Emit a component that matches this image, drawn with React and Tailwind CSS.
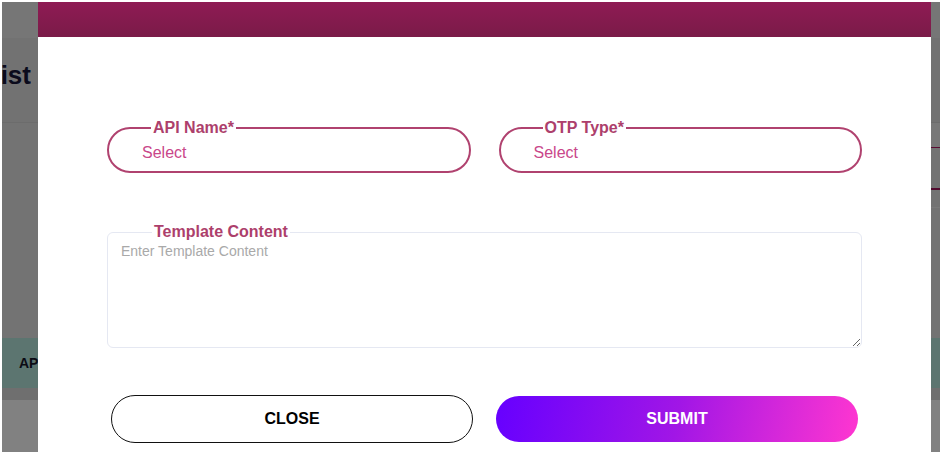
import React from "react";

const font = { fontFamily: '"Liberation Sans", Arial, sans-serif' };

function SelectField({ label }) {
  return (
    <fieldset className="m-0 min-w-0 rounded-full border-2 border-[#b0426f] px-[33px] py-0">
      <legend className="ml-[9px] px-[2px] text-[16px] font-bold leading-[18px] text-[#ad3f6c]">
        {label}
      </legend>
      <div className="flex h-[34px] items-center pb-[2px] text-[16px] text-[#c9478a]">Select</div>
    </fieldset>
  );
}

export default function App() {
  return (
    <div style={font} className="h-[454px] w-[942px] bg-white p-[2px]">
      <div className="relative h-full w-full overflow-hidden bg-[#737373]">
        {/* dimmed page underneath */}
        <div className="flex h-full flex-col">
          <div className="h-[36px] bg-[#767676]" />
          <div className="flex h-[84px] items-center bg-[#727272] pb-[10px]">
            <div className="flex w-[29px] justify-end overflow-hidden">
              <span className="whitespace-nowrap text-[26px] font-bold leading-[30px] text-[#0b0b1c]">
                Template List
              </span>
            </div>
          </div>
          <div className="h-[1px] bg-[#6c6c6c]" />
          <div className="flex h-[215px] flex-col bg-[#737373] pl-[60px]">
            <div className="h-[24px] bg-[#787878]" />
            <div className="h-[41px] border-t border-[#5a0c33]" />
            <div className="h-[19px] border-t-2 border-[#520a2e]" />
            <div className="flex-1 border-t border-[#7a7a7a]" />
          </div>
          <div className="flex h-[50px] items-center bg-[#5c7570] pl-[17px] text-[14px] font-bold text-[#0b0b14]">
            API Name
          </div>
          <div className="h-[12px] bg-[#6f6f6f]" />
          <div className="flex-1 bg-[#818181]" />
        </div>

        {/* modal */}
        <div className="absolute bottom-0 left-[36px] top-0 flex w-[893px] flex-col bg-white">
          <div className="h-[35px] bg-[linear-gradient(180deg,#8f1b54,#7a1b48)]" />
          <div className="px-[69px] pt-[82px]">
            <div className="grid grid-cols-2 gap-[28px]">
              <SelectField label="API Name*" />
              <SelectField label="OTP Type*" />
            </div>
            <fieldset className="m-0 mt-[50px] min-w-0 rounded-[6px] border border-[#e5e8f2] p-0">
              <legend className="ml-[44px] px-[2px] text-[16px] font-bold leading-[18px] text-[#ad3f6c]">
                Template Content
              </legend>
              <textarea
                placeholder="Enter Template Content"
                className="block h-[106px] w-full resize-y rounded-[6px] bg-transparent px-[13px] py-0 text-[14px] leading-[20px] text-[#333] outline-none placeholder:text-[#a9a9a9]"
                style={font}
              />
            </fieldset>
          </div>
          <div className="mt-[47px] grid grid-cols-2 items-center gap-[23px] px-[73px]">
            <button className="flex h-[48px] items-center justify-center rounded-full border border-[#111] bg-white text-[16px] font-bold text-black">
              CLOSE
            </button>
            <button className="flex h-[46px] items-center justify-center rounded-full bg-[linear-gradient(100deg,#6600ff_0%,#a116e6_50%,#ff36d0_100%)] text-[16px] font-bold text-white">
              SUBMIT
            </button>
          </div>
        </div>
      </div>
    </div>
  );
}
